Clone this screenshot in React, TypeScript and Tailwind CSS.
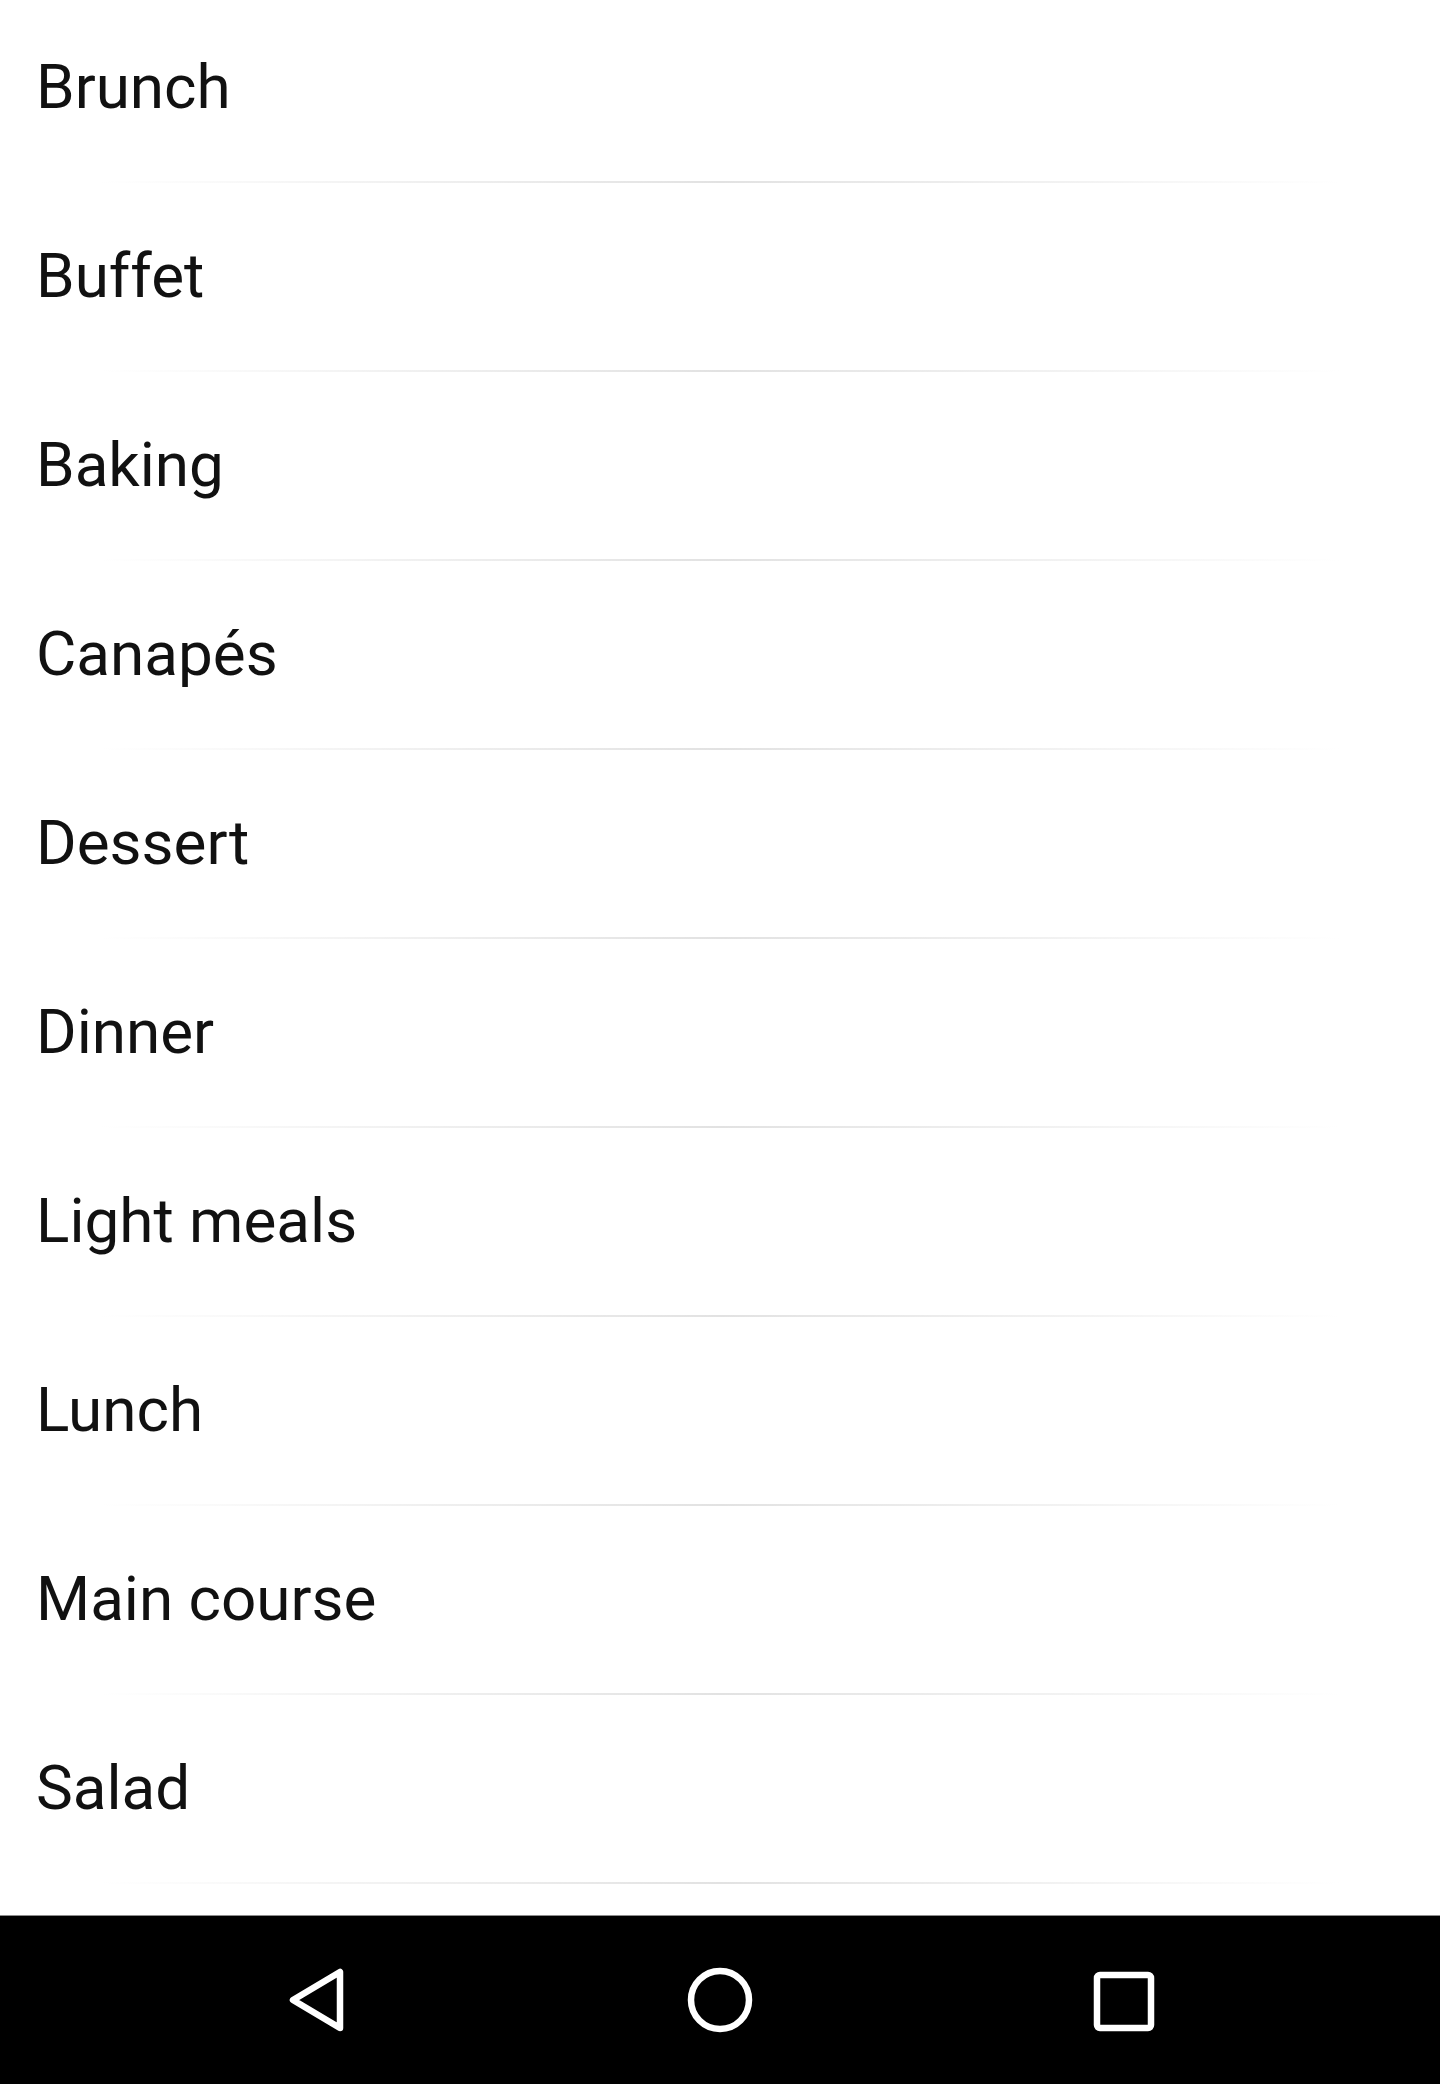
import { ReactNode } from "react";

const items = [
  "Brunch",
  "Buffet",
  "Baking",
  "Canapés",
  "Dessert",
  "Dinner",
  "Light meals",
  "Lunch",
  "Main course",
  "Salad",
];

const NavButton = ({ children }: { children: ReactNode }) => (
  <div className="w-[80px] h-[80px] flex items-center justify-center">
    <svg width="80" height="80" viewBox="0 0 80 80" fill="none" stroke="white" strokeWidth="6.5" strokeLinejoin="round">
      {children}
    </svg>
  </div>
);

const App = () => {
  return (
    <div className="w-[1440px] h-[2084px] bg-white flex flex-col" style={{ fontFamily: "Roboto, 'Noto Sans', sans-serif" }}>
      <ul className="flex flex-col">
        {items.map((item) => (
          <li key={item} className="h-[189px] flex flex-col">
            <div className="h-[181px] flex items-center pl-[36px] pb-[8px]">
              <span className="text-[62px] leading-none text-[#111111]">{item}</span>
            </div>
            <div className="h-[2px] mx-[100px] bg-gradient-to-r from-transparent via-[#e2e2e2] to-transparent" />
          </li>
        ))}
      </ul>
      <div className="flex-1" />
      {/* android nav bar */}
      <div className="h-[169px] bg-black border-t border-[#8c8c8c] flex items-center justify-center gap-[324px]">
        <NavButton>
          <path d="M17 40 L64 12 L64 68 Z" />
        </NavButton>
        <NavButton>
          <circle cx="40" cy="40" r="29" />
        </NavButton>
        <NavButton>
          <rect x="13" y="15" width="54" height="53" rx="3" />
        </NavButton>
      </div>
    </div>
  );
};

export default App;
